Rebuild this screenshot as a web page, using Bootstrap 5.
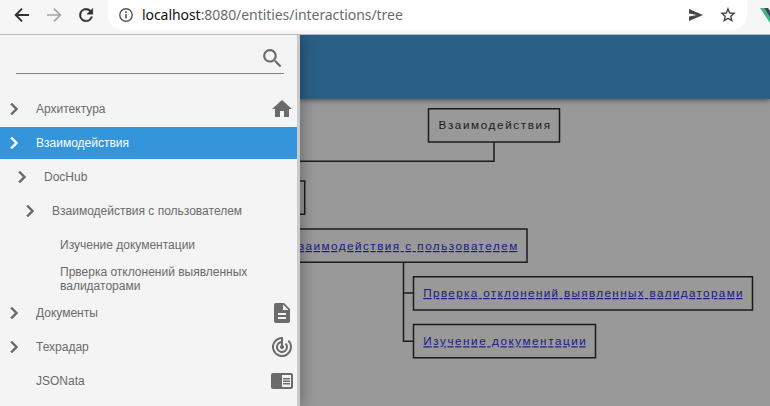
<!DOCTYPE html>
<html lang="ru">
<head>
<meta charset="utf-8">
<meta name="viewport" content="width=device-width, initial-scale=1">
<title>DocHub</title>
<link href="https://cdn.jsdelivr.net/npm/bootstrap@5.3.0/dist/css/bootstrap.min.css" rel="stylesheet">
<style>
body{height:406px;font-family:"Liberation Sans",Arial,sans-serif;background:#999}
svg{display:block;flex:none}
.browser-bar{height:35px;background:#f6f6f6;border-bottom:1px solid #b9b9b9;padding:0 0 4px 10px;z-index:3}
.tool-icon{margin-right:8px}
.address{width:639px;height:30px;background:#fff;border-radius:0 0 15px 15px;padding:0 11px 0 10px;margin-left:2px}
.url{font:14px/20px "Noto Sans",sans-serif;color:#6b6b6b;margin-left:8px;letter-spacing:-.06px}
.url b{font-weight:400;color:#111}
.star{margin-left:16px}
.extension{margin-left:13px}
.drawer{width:300px;flex:none;background:#f4f4f4;border-right:3px solid #c9c9c9;z-index:2;box-shadow:2px 0 14px rgba(0,0,0,.32)}
.search{height:39px;margin:0 13px 19px 16px;padding:13px 0 0;border-bottom:1px solid #808080}
.tree-item{height:32px;margin-bottom:2px;font-size:12px;line-height:14px;color:#6b6b6b;padding-left:2px}
.tree-item .label{margin-left:10px;width:200px}
.tree-item.leaf .label{margin-left:34px}
.tree-item.lv1{padding-left:10px}.tree-item.lv2{padding-left:18px}.tree-item.lv3{padding-left:26px}
.tree-item.current{background:#3495db;color:#fff}
.row-icon{margin-left:auto;margin-right:3px}
.app-header{height:64px;background:#2a6087;box-shadow:0 1px 5px rgba(0,0,0,.55);z-index:1}
.diagram text{font:11.7px "Liberation Sans",Arial,sans-serif;fill:#1c1c1c}
.diagram a text{fill:#1c1887;text-decoration:underline}
</style>
</head>
<body class="d-flex flex-column overflow-hidden">
<svg width="0" height="0" class="d-none"><symbol id="chev" viewBox="0 0 24 24"><path fill="currentColor" stroke="currentColor" stroke-width=".5" d="M8.59 16.580 13.170 12 8.590 7.410 10 6l6 6-6 6z"/></symbol></svg>
<header class="browser-bar position-relative d-flex align-items-center flex-shrink-0 overflow-hidden">
<svg class="tool-icon" width="24" height="22" viewBox="0 0 24 22" fill="none" stroke="#303030" stroke-width="1.900"><path d="M19 11H6M12 4.700 5.700 11l6.300 6.300"/></svg>
<svg class="tool-icon" width="24" height="22" viewBox="0 0 24 22" fill="none" stroke="#a5a5a5" stroke-width="1.700"><path d="M5 11h13M12 4.700 18.300 11 12 17.300"/></svg>
<svg class="tool-icon" width="24" height="22" viewBox="0 0 24 22"><path transform="translate(2 1) scale(.84)" fill="#303030" d="M17.650 6.350A7.960 7.960 0 0 0 12 4a8 8 0 1 0 7.730 10h-2.080A6 6 0 1 1 12 6c1.660 0 3.140.69 4.220 1.780L13 11h7V4z" stroke="#303030" stroke-width=".5"/></svg>
<div class="address d-flex align-items-center flex-shrink-0">
<svg width="16" height="16" viewBox="0 0 16 16"><circle cx="8" cy="8" r="6.200" fill="none" stroke="#555" stroke-width="1.400"/><path d="M7.200 7h1.600v4.500H7.200zM7.200 4.300h1.600v1.600H7.200z" fill="#555"/></svg>
<span class="url text-nowrap"><b>localhost</b>:8080/entities/interactions/tree</span>
<svg class="ms-auto" width="16" height="16" viewBox="0 0 16 16"><path fill="#454545" d="M1 2 15 8 1 14V9.500L9 8 1 6.500z"/></svg>
<svg class="star" width="16" height="16" viewBox="0 0 16 16"><path fill="none" stroke="#454545" stroke-width="1.400" d="m8 1.900 1.700 4.100 4.400.4-3.300 2.900 1 4.300L8 11.300l-3.800 2.300 1-4.300-3.300-2.900L6.300 6z"/></svg>
</div>
<svg class="extension" width="20" height="16" viewBox="0 0 20 16"><path fill="#41b883" d="M0 1h4l6 8 6-8h4L10 16z"/><path fill="#35495e" d="M4 1h4l2 3 2-3h4l-6 9z"/></svg>
</header>
<div class="d-flex flex-grow-1">
<nav class="drawer">
<div class="search d-flex justify-content-end"><svg width="25" height="25" viewBox="0 0 24 24"><path transform="translate(1 -2)" fill="#6b6b6b" d="M9.500 3a6.500 6.500 0 0 1 4.930 10.730l.27.270h.8l5 5-1.500 1.500-5-5v-.8l-.270-.270A6.500 6.500 0 1 1 9.500 3m0 2a4.500 4.500 0 1 0 0 9 4.500 4.500 0 0 0 0-9"/></svg></div>
<div class="tree-item d-flex align-items-center"><svg width="24" height="24"><use href="#chev"/></svg><span class="label">Архитектура</span><svg class="row-icon" width="24" height="24" viewBox="0 0 24 24"><path fill="currentColor" d="M10 20v-6h4v6h5v-8h3L12 3 2 12h3v8z"/></svg></div>
<div class="tree-item current d-flex align-items-center"><svg width="24" height="24"><use href="#chev"/></svg><span class="label">Взаимодействия</span></div>
<div class="tree-item lv1 d-flex align-items-center"><svg width="24" height="24"><use href="#chev"/></svg><span class="label">DocHub</span></div>
<div class="tree-item lv2 d-flex align-items-center"><svg width="24" height="24"><use href="#chev"/></svg><span class="label">Взаимодействия с пользователем</span></div>
<div class="tree-item leaf lv3 d-flex align-items-center"><span class="label">Изучение документации</span></div>
<div class="tree-item leaf lv3 d-flex align-items-center"><span class="label">Прверка отклонений выявленных валидаторами</span></div>
<div class="tree-item d-flex align-items-center"><svg width="24" height="24"><use href="#chev"/></svg><span class="label">Документы</span><svg class="row-icon" width="24" height="24" viewBox="0 0 24 24"><path fill="currentColor" d="M13 9h5.500L13 3.500zM6 2h8l6 6v12a2 2 0 0 1-2 2H6a2 2 0 0 1-2-2V4a2 2 0 0 1 2-2m10 16v-2H8v2zm0-4v-2H8v2z"/></svg></div>
<div class="tree-item d-flex align-items-center"><svg width="24" height="24"><use href="#chev"/></svg><span class="label">Техрадар</span><svg class="row-icon" width="24" height="24" viewBox="0 0 24 24"><path fill="currentColor" d="m19.070 4.930-1.410 1.410A8 8 0 1 1 11 4.070v2.020A6 6 0 1 0 16.240 7.760l-1.410 1.410A4 4 0 1 1 11 8.140v2.140A2 2 0 1 0 13 10.280V2h-1a10 10 0 1 0 7.070 2.930"/></svg></div>
<div class="tree-item leaf mb-0 d-flex align-items-center"><span class="label">JSONata</span><svg class="row-icon" width="24" height="24" viewBox="0 0 24 24"><path fill="currentColor" d="M3 4h18a2 2 0 0 1 2 2v12a2 2 0 0 1-2 2H3a2 2 0 0 1-2-2V6a2 2 0 0 1 2-2m9 2v12h9V6zm1 3h7v1.500h-7zm0 2.500h7V13h-7zm0 2.500h7v1.500h-7z"/></svg></div>
</nav>
<main class="flex-grow-1 d-flex flex-column">
<div class="app-header flex-shrink-0"></div>
<svg class="diagram" width="470" height="307" viewBox="300 99 470 307">
<g fill="none" stroke="#1b1b1b" stroke-width="1.500">
<path d="M494 142v19.300H290M403.500 262v79.300H413M403.500 293H413"/>
<path d="M428.500 108.800h131v33.200h-131zM200 181h104.700v33.200H200zM280 229h247v33.200H280zM413.500 276.800h339v33.200h-339zM413.500 324.500h182v33.200h-182z"/></g>
<text x="438.500" y="129" textLength="111.500" lengthAdjust="spacing">Взаимодействия</text>
<a><text x="289.500" y="250" textLength="227.700">Взаимодействия с пользователем</text></a>
<a><text x="423.300" y="297" textLength="319.300">Прверка отклонений выявленных валидаторами</text></a>
<a><text x="423.300" y="345.300" textLength="162.500">Изучение документации</text></a>
</svg>
</main>
</div>
<script src="https://cdn.jsdelivr.net/npm/bootstrap@5.3.0/dist/js/bootstrap.bundle.min.js"></script>
</body>
</html>
